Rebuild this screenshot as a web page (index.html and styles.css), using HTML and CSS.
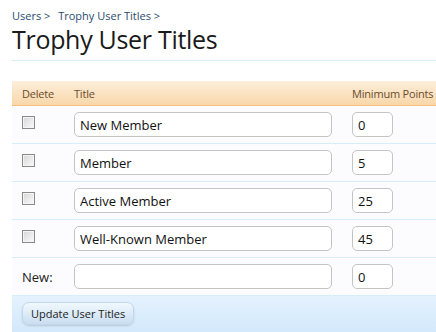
FILE: index.html
```html
<!DOCTYPE html>
<html lang="en">
<head>
    <meta charset="UTF-8">
    <title>Trophy User Titles</title>
    <link rel="stylesheet" href="styles.css">
</head>
<body>

    <div class="breadcrumb">
        <a href="#">Users</a> <span class="arrow">&gt;</span>
        <a href="#">Trophy User Titles</a> <span class="arrow">&gt;</span>
    </div>

    <h1 class="title-bar">Trophy User Titles</h1>

    <form class="titles-form">
        <div class="row header">
            <div class="col-delete">Delete</div>
            <div class="col-title">Title</div>
            <div class="col-points">Minimum Points</div>
        </div>

        <div class="row">
            <div class="col-delete"><input type="checkbox"></div>
            <div class="col-title"><input type="text" class="text-input" value="New Member"></div>
            <div class="col-points"><input type="text" class="num-input" value="0"></div>
        </div>
        <div class="row">
            <div class="col-delete"><input type="checkbox"></div>
            <div class="col-title"><input type="text" class="text-input" value="Member"></div>
            <div class="col-points"><input type="text" class="num-input" value="5"></div>
        </div>
        <div class="row">
            <div class="col-delete"><input type="checkbox"></div>
            <div class="col-title"><input type="text" class="text-input" value="Active Member"></div>
            <div class="col-points"><input type="text" class="num-input" value="25"></div>
        </div>
        <div class="row">
            <div class="col-delete"><input type="checkbox"></div>
            <div class="col-title"><input type="text" class="text-input" value="Well-Known Member"></div>
            <div class="col-points"><input type="text" class="num-input" value="45"></div>
        </div>
        <div class="row new-row">
            <div class="col-delete">New:</div>
            <div class="col-title"><input type="text" class="text-input" value=""></div>
            <div class="col-points"><input type="text" class="num-input" value="0"></div>
        </div>

        <div class="submit-bar">
            <button type="button" class="update-btn">Update User Titles</button>
        </div>
    </form>

</body>
</html>
```

FILE: styles.css
```css
body {
    font-family: 'Open Sans', 'DejaVu Sans', sans-serif;
    background-color: #ffffff;
    margin: 0;
    padding: 0 0 0 12px;
    color: #222;
}

.breadcrumb {
    font-size: 11px;
    padding-top: 8px;
    height: 15px;
    line-height: 15px;
}

.breadcrumb a {
    color: #2b4b6e;
    text-decoration: none;
}

.breadcrumb .arrow {
    color: #2b4b6e;
    margin-right: 5px;
}

.title-bar {
    font-size: 25px;
    font-weight: normal;
    letter-spacing: -0.3px;
    color: #1a1a1a;
    margin: 0;
    height: 37px;
    line-height: 32px;
    border-bottom: 1px solid #d7edfc;
}

.titles-form {
    margin-top: 20px;
    width: 424px;
}

.row {
    display: flex;
    align-items: center;
    height: 37px;
    border-bottom: 1px solid #d7edfc;
    background-color: #fcfcff;
    font-size: 13px;
}

.row.header {
    height: 24px;
    font-size: 11px;
    letter-spacing: -0.2px;
    color: #6a4d2e;
    background: linear-gradient(to bottom, #fdeedb, #f9d7a9);
    border-bottom: 1px solid #f6bf7c;
}

.col-delete {
    width: 62px;
    padding-left: 10px;
    box-sizing: border-box;
    flex-shrink: 0;
}

.col-title {
    width: 278px;
    flex-shrink: 0;
}

.col-points {
    flex: 1;
    white-space: nowrap;
}

.col-delete input[type="checkbox"] {
    appearance: none;
    -webkit-appearance: none;
    display: block;
    margin: 0 0 4px 0;
    width: 13px;
    height: 13px;
    border: 1px solid #8a8a8a;
    box-shadow: inset 0 0 0 1px #f4f4f4;
    background: linear-gradient(135deg, #d6d6d6, #fbfbfb);
    box-sizing: border-box;
}

.text-input,
.num-input {
    font-family: 'Open Sans', 'DejaVu Sans', sans-serif;
    font-size: 13px;
    color: #111;
    height: 25px;
    padding: 0 5px;
    border: 1px solid #c4c4c4;
    border-radius: 5px;
    background-color: #fff;
    box-sizing: border-box;
    outline: none;
}

.text-input {
    width: 258px;
}

.num-input {
    width: 41px;
}

.submit-bar {
    height: 32px;
    padding: 5px 0 0 10px;
    background: linear-gradient(to bottom, #e4f2fd, #d2e8fb);
    border-bottom: 1px solid #a9cbe5;
}

.update-btn {
    font-family: 'Open Sans', 'DejaVu Sans', sans-serif;
    font-size: 11px;
    color: #222;
    height: 23px;
    padding: 0 8px;
    border: 1px solid #c3d8ea;
    border-radius: 7px;
    background: linear-gradient(to bottom, #f1f8fe, #c9def1);
    box-shadow: 0 1px 2px rgba(0, 0, 0, 0.15);
    cursor: pointer;
}
```
